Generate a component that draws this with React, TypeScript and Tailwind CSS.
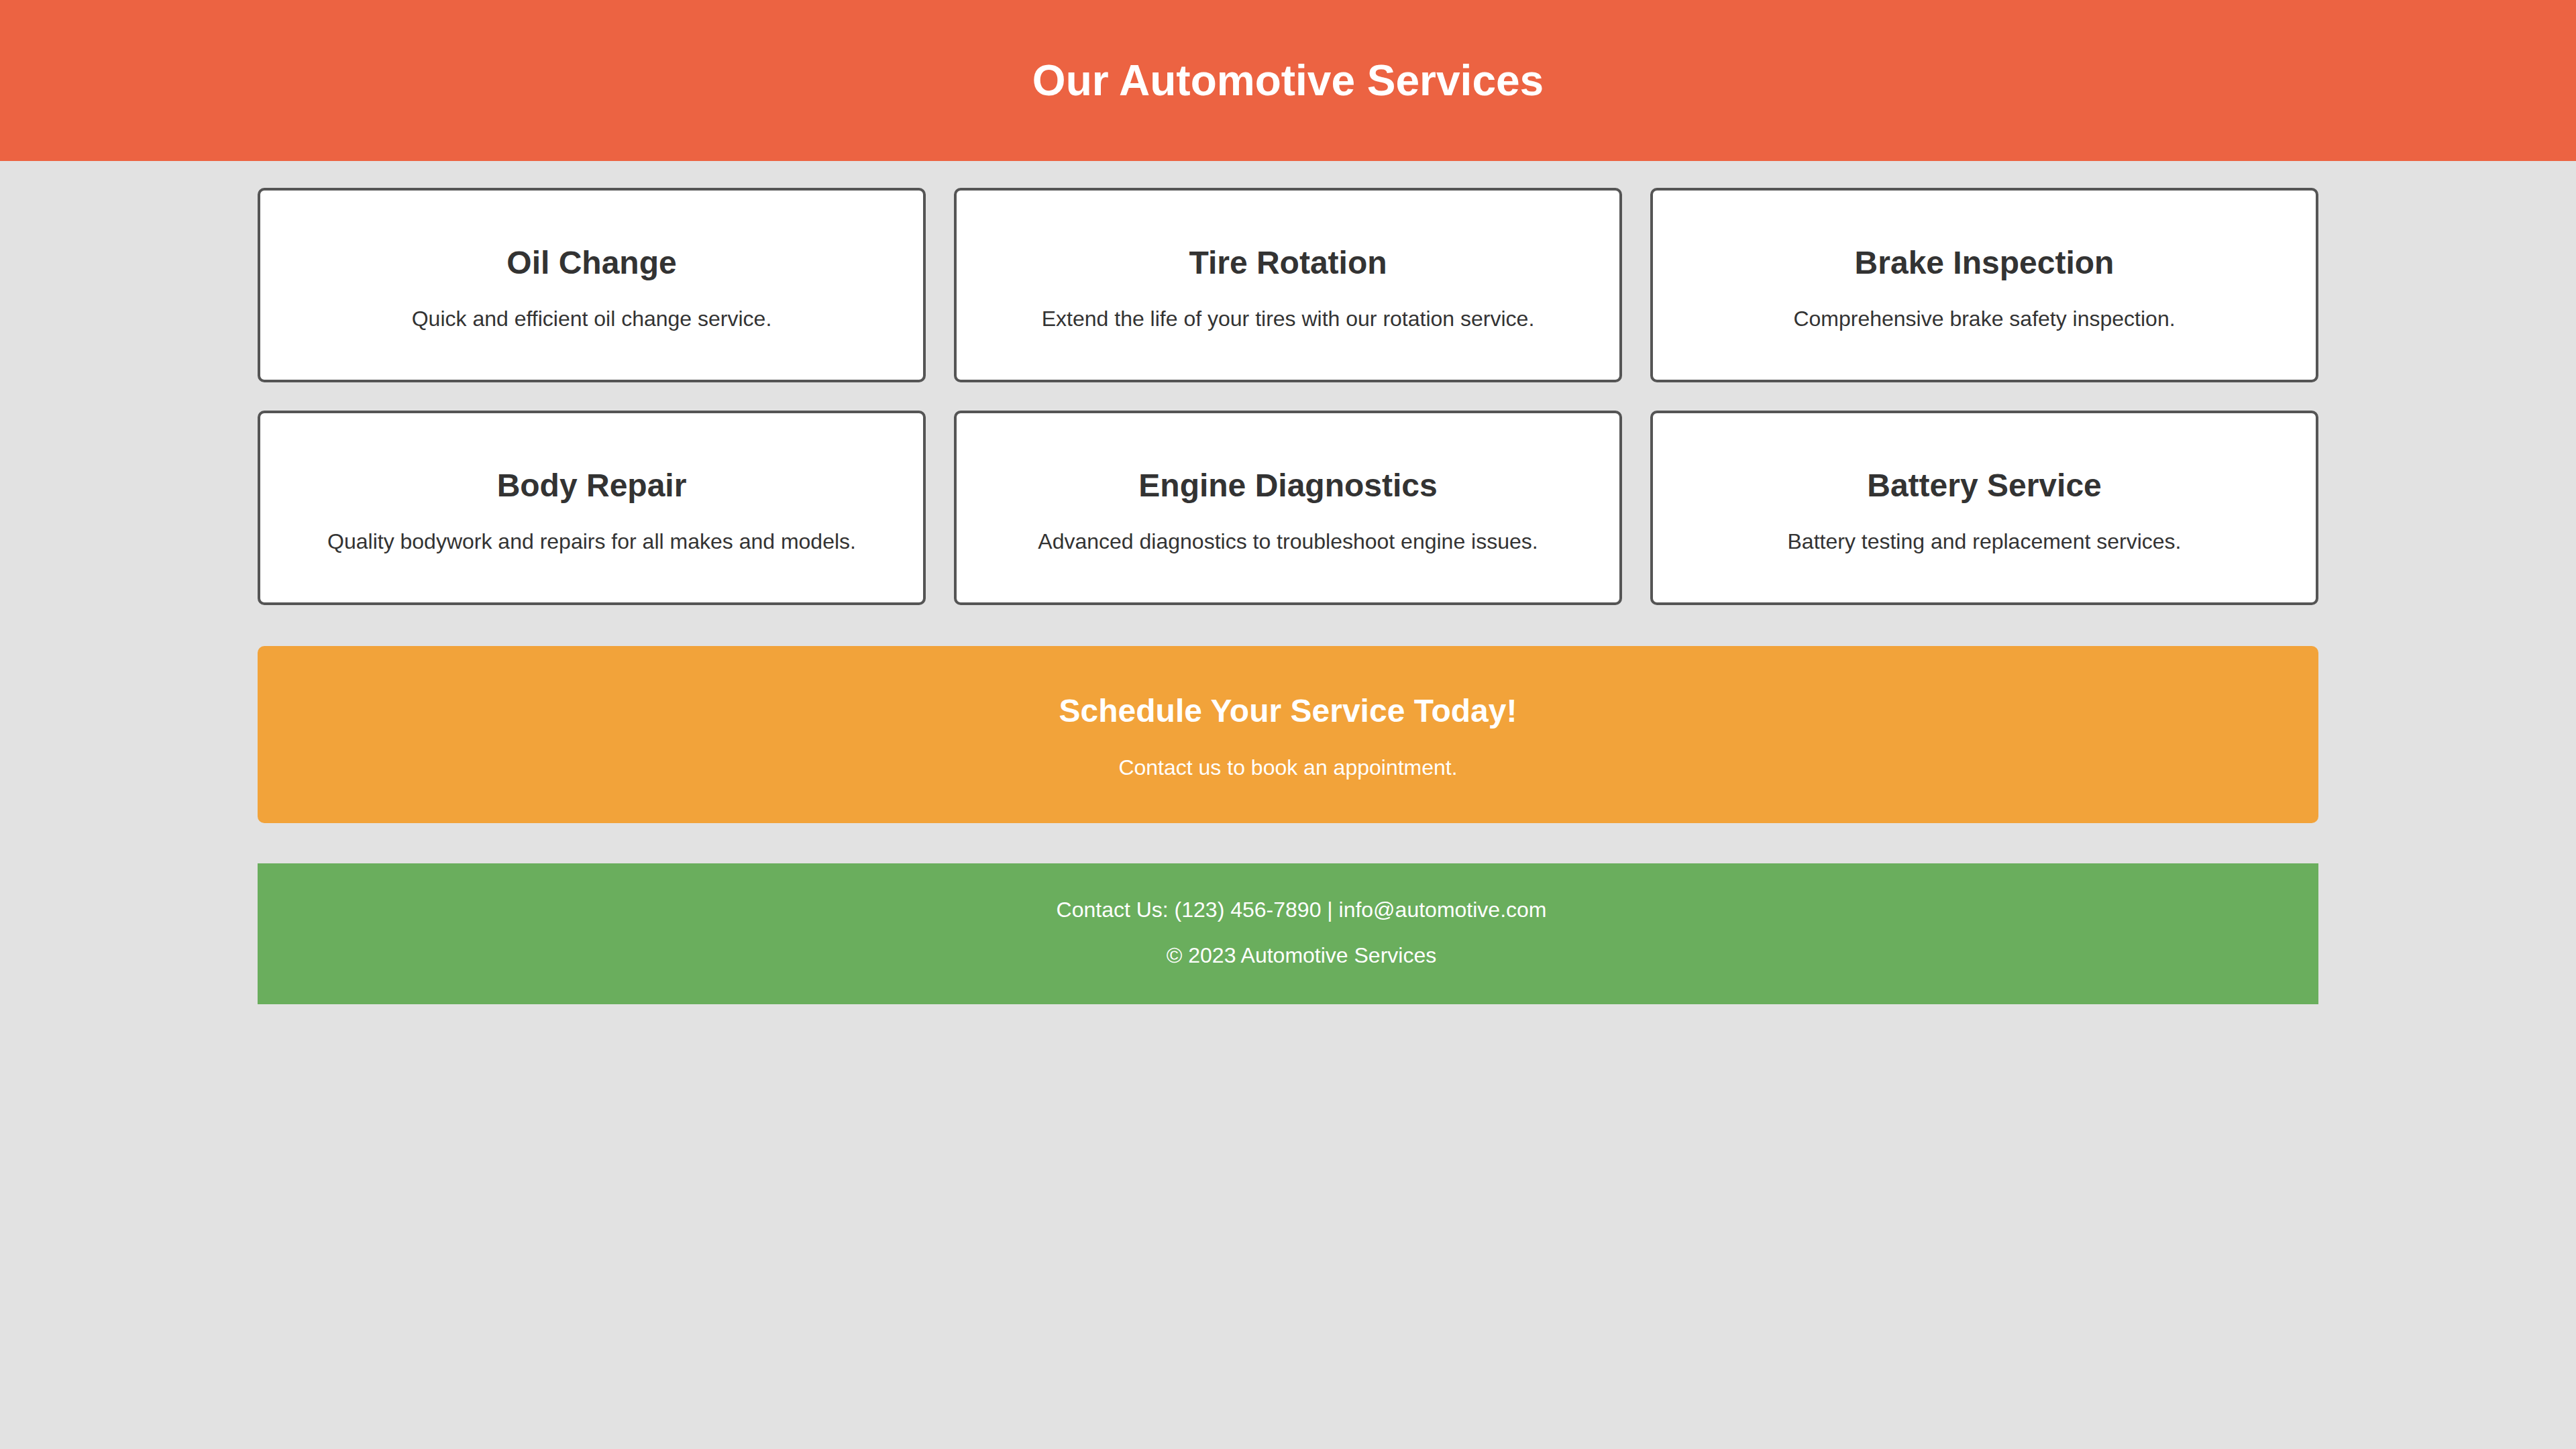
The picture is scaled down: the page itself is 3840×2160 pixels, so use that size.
import React from 'react';

interface Service {
    title: string;
    text: string;
}

const services: Service[] = [
    { title: 'Oil Change', text: 'Quick and efficient oil change service.' },
    { title: 'Tire Rotation', text: 'Extend the life of your tires with our rotation service.' },
    { title: 'Brake Inspection', text: 'Comprehensive brake safety inspection.' },
    { title: 'Body Repair', text: 'Quality bodywork and repairs for all makes and models.' },
    { title: 'Engine Diagnostics', text: 'Advanced diagnostics to troubleshoot engine issues.' },
    { title: 'Battery Service', text: 'Battery testing and replacement services.' },
];

const ServiceCard: React.FC<{ service: Service }> = ({ service }) => (
    <div className="bg-white border-4 border-[#555] rounded-[10px] pt-[80px] pb-[72px] text-center text-[#333]">
        <h3 className="text-[48px] leading-[55px] font-bold">{service.title}</h3>
        <p className="mt-[38px] text-[32px] leading-[37px]">{service.text}</p>
    </div>
);

export default function App() {
    return (
        <div className="min-h-screen bg-[#e2e2e2] font-['Liberation_Sans',Arial,sans-serif]">
            {/* Header */}
            <header className="h-[240px] bg-[#ec6342] flex items-center justify-center">
                <h1 className="text-[64px] leading-[74px] font-bold text-white">Our Automotive Services</h1>
            </header>

            <main className="w-[3072px] mx-auto pt-[40px]">
                {/* Services grid */}
                <section className="grid grid-cols-3 gap-[42px]">
                    {services.map((s) => (
                        <ServiceCard key={s.title} service={s} />
                    ))}
                </section>

                {/* Call to action */}
                <section className="mt-[61px] bg-[#f2a33a] rounded-[10px] pt-[69px] pb-[64px] text-center text-white">
                    <h2 className="text-[48px] leading-[55px] font-bold">Schedule Your Service Today!</h2>
                    <p className="mt-[39px] text-[32px] leading-[37px]">Contact us to book an appointment.</p>
                </section>

                {/* Footer */}
                <footer className="mt-[60px] bg-[#6aae5d] pt-[51px] pb-[54px] pl-[40px] text-center text-white text-[32px] leading-[37px]">
                    <p>Contact Us: (123) 456-7890 | info@automotive.com</p>
                    <p className="mt-[31px]">© 2023 Automotive Services</p>
                </footer>
            </main>
        </div>
    );
}
